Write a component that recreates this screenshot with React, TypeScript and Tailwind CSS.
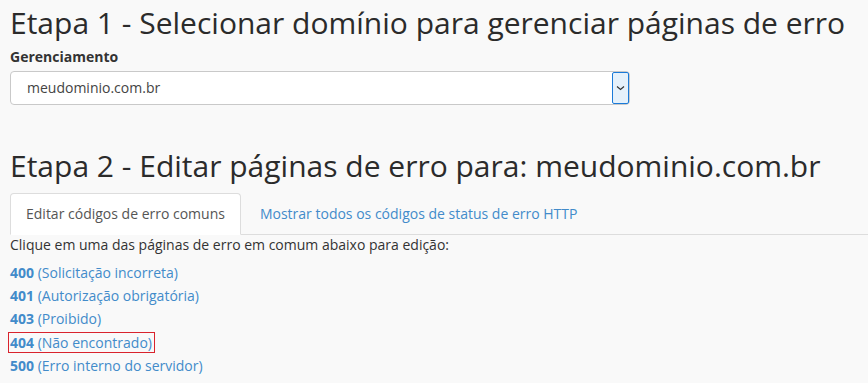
import React from "react";

const errors = [
  { code: "400", label: "Solicitação incorreta" },
  { code: "401", label: "Autorização obrigatória" },
  { code: "403", label: "Proibido" },
  { code: "404", label: "Não encontrado", marked: true },
  { code: "500", label: "Erro interno do servidor" },
];

export default function App() {
  return (
    <div className="min-h-[383px] w-full bg-[#f9f9f9] pl-[10px] text-[14px] leading-[20px] text-[#333] [font-family:'Open_Sans',sans-serif]">
      {/* Etapa 1 */}
      <h1 className="pt-[6px] text-[30px] leading-[33px] font-normal text-[#2b2b2b]">
        Etapa 1 - Selecionar domínio para gerenciar páginas de erro
      </h1>
      <label className="mt-[8px] block font-bold text-[#333]">Gerenciamento</label>
      <div className="mt-[4px] flex h-[34px] w-[620px] items-center rounded-[4px] border border-[#c9c9c9] bg-white">
        <span className="flex-1 pl-[16px] text-[#444]">meudominio.com.br</span>
        <div className="flex h-[32px] w-[17px] items-center justify-center rounded-[2px] border border-[#1a7ad8] bg-[#e5f1fb]">
          <svg width="9" height="6" viewBox="0 0 9 6" fill="none">
            <path d="M1 1.5 4.5 4.5 8 1.5" stroke="#333" strokeWidth="1.2" />
          </svg>
        </div>
      </div>

      {/* Etapa 2 */}
      <h2 className="mt-[44px] text-[30px] leading-[33px] font-normal text-[#2b2b2b]">
        Etapa 2 - Editar páginas de erro para: meudominio.com.br
      </h2>
      <ul className="mt-[11px] flex border-b border-[#dddddd]">
        <li className="-mb-px">
          <span className="block rounded-t-[4px] border border-[#dddddd] border-b-transparent bg-white px-[15px] py-[10px] text-[#555]">
            Editar códigos de erro comuns
          </span>
        </li>
        <li className="-mb-px ml-[3px]">
          <span className="block border border-transparent px-[15px] py-[10px] text-[#428bca]">
            Mostrar todos os códigos de status de erro HTTP
          </span>
        </li>
      </ul>
      <p className="text-[#333]">Clique em uma das páginas de erro em comum abaixo para edição:</p>
      <div className="mt-[6px]">
        {errors.map((e) => (
          <div key={e.code} className="leading-[23.2px] text-[#428bca]">
            <span
              className={
                e.marked
                  ? "-ml-px pl-px pr-[2px] outline outline-1 outline-[#d9232d]"
                  : ""
              }
            >
              <b className="font-bold">{e.code}</b> ({e.label})
            </span>
          </div>
        ))}
      </div>
    </div>
  );
}
